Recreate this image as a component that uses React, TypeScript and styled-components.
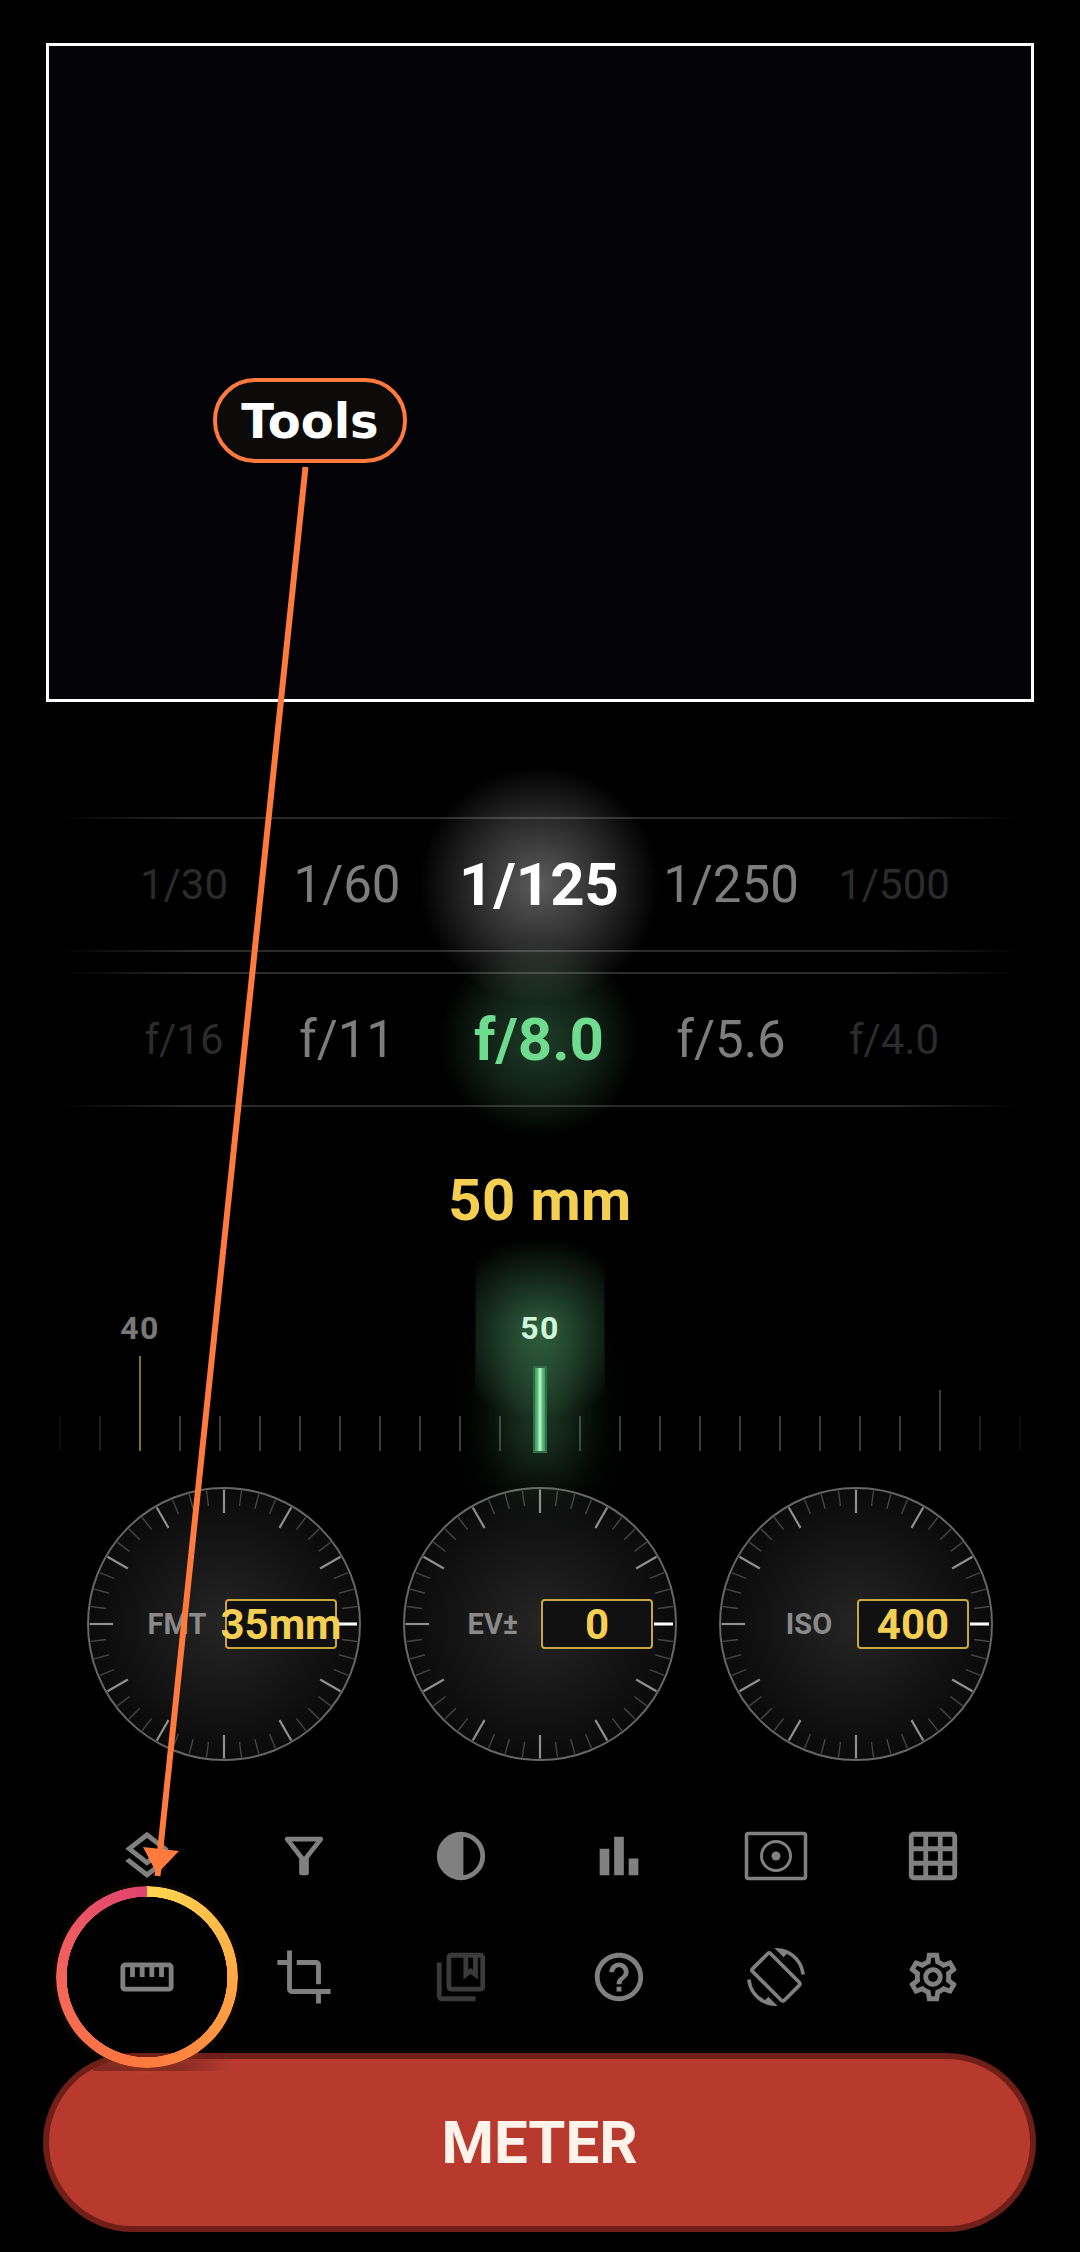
import React from "react";
import styled, { createGlobalStyle } from "styled-components";
import {
  MdOutlineLayers,
  MdOutlineFilterAlt,
  MdBarChart,
  MdGridOn,
  MdOutlineStraighten,
  MdCrop,
  MdOutlineCollectionsBookmark,
  MdHelpOutline,
  MdOutlineScreenRotation,
  MdOutlineSettings,
} from "react-icons/md";

const Global = createGlobalStyle`
  html, body { margin: 0; padding: 0; background: #000; }
  body { font-family: Roboto, "Liberation Sans", sans-serif; }
`;

const Page = styled.div`
  position: relative;
  width: 1080px;
  height: 2252px;
  background: #000;
  overflow: hidden;
  display: flex;
  flex-direction: column;
`;

const Viewfinder = styled.div`
  box-sizing: border-box;
  flex: none;
  width: 988px;
  height: 659px;
  margin: 43px 46px 0;
  border: 3px solid #fff;
  background: #030206;
`;

const ScaleRow = styled.div<{ $top: number }>`
  position: relative;
  flex: none;
  height: 135px;
  margin-top: ${(p) => p.$top}px;
  padding-right: 2px;
  display: grid;
  grid-template-columns: 163px 163px 221px 163px 163px;
  justify-content: center;
  align-items: center;
  &::before,
  &::after {
    content: "";
    position: absolute;
    left: 60px;
    right: 60px;
    height: 2px;
    z-index: 2;
    background: linear-gradient(
      90deg,
      rgba(255, 255, 255, 0),
      rgba(255, 255, 255, 0.17) 14%,
      rgba(255, 255, 255, 0.17) 86%,
      rgba(255, 255, 255, 0)
    );
  }
  &::before { top: 0; }
  &::after { bottom: 0; }
`;

const ScaleValue = styled.div<{ $level: 0 | 1 | 2; $green?: boolean }>`
  position: relative;
  text-align: center;
  white-space: nowrap;
  line-height: 1;
  font-size: ${(p) => [42, 51, 60][p.$level]}px;
  font-weight: ${(p) => (p.$level === 2 ? 700 : 400)};
  color: ${(p) =>
    p.$level === 2 ? (p.$green ? "#6EDB8F" : "#fff") : p.$level === 1 ? "#7d7d7d" : "#2b2b2b"};
`;

const ValueText = styled.span`
  position: relative;
  z-index: 1;
`;

const ValueGlow = styled.div<{ $green?: boolean }>`
  position: absolute;
  left: 50%;
  top: 50%;
  width: ${(p) => (p.$green ? 200 : 240)}px;
  height: ${(p) => (p.$green ? 196 : 238)}px;
  transform: translate(-50%, -50%);
  pointer-events: none;
  background: ${(p) =>
    p.$green
      ? "radial-gradient(ellipse closest-side, rgba(110,219,143,.28), rgba(110,219,143,.15) 55%, rgba(110,219,143,0))"
      : "radial-gradient(ellipse closest-side, rgba(255,255,255,.36), rgba(255,255,255,.17) 55%, rgba(255,255,255,0))"};
`;

const FocalTitle = styled.div`
  flex: none;
  margin-top: 58px;
  height: 70px;
  line-height: 70px;
  text-align: center;
  font-size: 58px;
  font-weight: 700;
  letter-spacing: 0.4px;
  color: #f5cf52;
`;

const Ruler = styled.div`
  flex: none;
  height: 146px;
  margin-top: 70px;
  display: flex;
  justify-content: center;
  align-items: flex-end;
`;

const TickCell = styled.div`
  position: relative;
  flex: none;
  width: 40px;
  display: flex;
  flex-direction: column;
  align-items: center;
  justify-content: flex-end;
`;

const Tick = styled.div<{ $h: number; $color: string }>`
  width: 2px;
  height: ${(p) => p.$h}px;
  background: ${(p) => p.$color};
`;

const RulerLabel = styled.div<{ $active?: boolean }>`
  position: absolute;
  left: 50%;
  bottom: 105px;
  transform: translateX(-50%);
  z-index: 1;
  font-size: 32px;
  line-height: 36px;
  font-weight: 700;
  letter-spacing: 1.5px;
  color: ${(p) => (p.$active ? "#D6F7DF" : "#787878")};
`;

const LabelGlow = styled.div`
  position: absolute;
  left: 50%;
  bottom: -5px;
  width: 129px;
  height: 216px;
  transform: translateX(-50%);
  background: radial-gradient(
    ellipse 100px 92px at 50% 88px,
    rgba(110, 219, 143, 0.42),
    rgba(110, 219, 143, 0.16) 60%,
    rgba(110, 219, 143, 0)
  );
`;

const Needle = styled.div`
  box-sizing: border-box;
  position: relative;
  z-index: 1;
  width: 14px;
  height: 87px;
  margin-bottom: -2px;
  border: 2px solid #2f6e48;
  background: linear-gradient(90deg, #3f9a60, #5cc07c 25%, #c8f9d5 50%, #5cc07c 75%, #3f9a60);
  box-shadow: 0 4px 62px 14px rgba(110, 219, 143, 0.48);
`;

const WheelRow = styled.div`
  flex: none;
  margin-top: 36px;
  display: flex;
  justify-content: center;
  gap: 42px;
`;

const Wheel = styled.div`
  box-sizing: border-box;
  position: relative;
  flex: none;
  width: 274px;
  height: 274px;
  border-radius: 50%;
  border: 2px solid #666;
  background: radial-gradient(circle closest-side, #252525, #0a0a0a);
  display: grid;
  grid-template-columns: 1fr 1fr;
  align-items: center;
`;

const WheelTicks = styled.svg`
  position: absolute;
  left: -2px;
  top: -2px;
  width: 274px;
  height: 274px;
`;

const WheelLabel = styled.div`
  position: relative;
  padding-left: 41px;
  text-align: center;
  font-size: 29px;
  font-weight: 700;
  color: #8a8a8a;
`;

const WheelValue = styled.div`
  box-sizing: border-box;
  position: relative;
  width: 112px;
  height: 50px;
  margin-left: 1px;
  border: 2px solid #c9a63c;
  border-radius: 4px;
  background: #111;
  display: flex;
  align-items: center;
  justify-content: center;
  white-space: nowrap;
  font-size: 42px;
  font-weight: 700;
  color: #f5cf52;
`;

const ToolGrid = styled.div`
  position: relative;
  z-index: 2;
  flex: none;
  margin: 34px 0 0 68px;
  width: 944px;
  display: grid;
  grid-template-columns: repeat(6, 1fr);
  grid-auto-rows: 121px;
  place-items: center;
  color: #808080;
  font-size: 58px;
`;

const ToolCell = styled.div<{ $dim?: boolean }>`
  position: relative;
  width: 58px;
  height: 58px;
  display: flex;
  align-items: center;
  justify-content: center;
  color: ${(p) => (p.$dim ? "#3a3a3a" : "#808080")};
  svg { flex: none; }
`;

const HighlightRing = styled.div`
  position: absolute;
  left: 50%;
  top: 50%;
  width: 182px;
  height: 182px;
  transform: translate(-50%, -50%);
  border-radius: 50%;
  box-shadow: 0 0 10px rgba(255, 170, 60, 0.12), inset 0 0 12px rgba(255, 170, 60, 0.1);
  &::before {
    content: "";
    position: absolute;
    inset: 0;
    border-radius: 50%;
    background: conic-gradient(#ffd74f 0deg, #ffa844 90deg, #ff7a3d 180deg, #f4645a 270deg, #e0436f 360deg);
    mask: radial-gradient(circle closest-side, transparent 0 calc(100% - 11px), #000 calc(100% - 10.5px));
  }
`;

const MeterButton = styled.div`
  box-sizing: border-box;
  position: relative;
  flex: none;
  width: 993px;
  height: 179px;
  margin: 16px 0 0 43px;
  border: 6px solid #6f1f18;
  border-radius: 90px;
  background: #b83a2f;
  overflow: hidden;
  display: flex;
  align-items: center;
  justify-content: center;
  font-size: 60px;
  font-weight: 700;
  color: #fff3ea;
`;

const ButtonShade = styled.div`
  position: absolute;
  left: 44px;
  top: 0;
  width: 140px;
  height: 12px;
  background: linear-gradient(90deg, rgba(0, 0, 0, 0.3) 55%, rgba(0, 0, 0, 0));
`;

const Overlay = styled.svg`
  position: absolute;
  left: 0;
  top: 0;
  z-index: 5;
  pointer-events: none;
`;

const TooltipPill = styled.div`
  box-sizing: border-box;
  position: absolute;
  left: 213px;
  top: 378px;
  z-index: 6;
  width: 194px;
  height: 85px;
  border: 4px solid #ff7a3d;
  border-radius: 42px;
  background: #0d0b0a;
  display: flex;
  align-items: center;
  justify-content: center;
  font-family: "DejaVu Sans", sans-serif;
  font-size: 48px;
  font-weight: 700;
  color: #fff;
`;

const shutter = ["1/30", "1/60", "1/125", "1/250", "1/500"];
const aperture = ["f/16", "f/11", "f/8.0", "f/5.6", "f/4.0"];
const levels: (0 | 1 | 2)[] = [0, 1, 2, 1, 0];

const tickXs = Array.from({ length: 25 }, (_, i) => 60 + i * 40);

function tickColor(x: number) {
  if (x === 60 || x === 1020) return "#0d0d0d";
  if (x === 100 || x === 980) return "#1c1c1c";
  return "#3c3c3c";
}

function WheelScale() {
  const c = 137;
  return (
    <WheelTicks viewBox="0 0 274 274">
      {Array.from({ length: 48 }, (_, i) => {
        if (i === 12) return null;
        const major = i % 4 === 0;
        const a = (i * 7.5 * Math.PI) / 180;
        const r1 = 134.5;
        const r2 = major ? 111 : 119;
        return (
          <line
            key={i}
            x1={c + r1 * Math.sin(a)}
            y1={c - r1 * Math.cos(a)}
            x2={c + r2 * Math.sin(a)}
            y2={c - r2 * Math.cos(a)}
            stroke={major ? "#8f8f8f" : "#444"}
            strokeWidth={major ? 2.2 : 1.4}
          />
        );
      })}
      <line x1={c + 114} y1={c} x2={c + 133} y2={c} stroke="#fff" strokeWidth={3} />
    </WheelTicks>
  );
}

function ContrastIcon() {
  return (
    <svg width="58" height="58" viewBox="0 0 24 24" fill="currentColor">
      <path
        fillRule="evenodd"
        d="M12 2a10 10 0 1 0 0 20 10 10 0 0 0 0-20zm1 2.07c3.94.49 7 3.85 7 7.93s-3.06 7.44-7 7.93V4.07z"
      />
    </svg>
  );
}

function MeteringIcon() {
  return (
    <svg width="64" height="50" viewBox="0 0 64 50" fill="none" stroke="currentColor">
      <rect x="2.5" y="2.5" width="59" height="45" rx="2" strokeWidth="3.5" />
      <circle cx="32" cy="25" r="14.5" strokeWidth="3" />
      <circle cx="32" cy="25" r="4.5" fill="currentColor" stroke="none" />
    </svg>
  );
}

export default function App() {
  return (
    <Page>
      <Global />
      <Viewfinder />

      <ScaleRow $top={115}>
        {shutter.map((t, i) => (
          <ScaleValue key={t} $level={levels[i]}>
            {i === 2 && <ValueGlow />}
            <ValueText>{t}</ValueText>
          </ScaleValue>
        ))}
      </ScaleRow>
      <ScaleRow $top={20}>
        {aperture.map((t, i) => (
          <ScaleValue key={t} $level={levels[i]} $green={i === 2}>
            {i === 2 && <ValueGlow $green />}
            <ValueText>{t}</ValueText>
          </ScaleValue>
        ))}
      </ScaleRow>

      <FocalTitle>50 mm</FocalTitle>

      <Ruler>
        {tickXs.map((x) => {
          if (x === 540) {
            return (
              <TickCell key={x}>
                <LabelGlow />
                <RulerLabel $active>50</RulerLabel>
                <Needle />
              </TickCell>
            );
          }
          if (x === 140) {
            return (
              <TickCell key={x}>
                <RulerLabel>40</RulerLabel>
                <Tick $h={95} $color="#8a6f2a" />
              </TickCell>
            );
          }
          return (
            <TickCell key={x}>
              <Tick $h={x === 940 ? 61 : 35} $color={tickColor(x)} />
            </TickCell>
          );
        })}
      </Ruler>

      <WheelRow>
        {[
          ["FMT", "35mm"],
          ["EV±", "0"],
          ["ISO", "400"],
        ].map(([label, value]) => (
          <Wheel key={label}>
            <WheelScale />
            <WheelLabel>{label}</WheelLabel>
            <WheelValue>{value}</WheelValue>
          </Wheel>
        ))}
      </WheelRow>

      <ToolGrid>
        <ToolCell><MdOutlineLayers size={58} /></ToolCell>
        <ToolCell><MdOutlineFilterAlt size={58} /></ToolCell>
        <ToolCell><ContrastIcon /></ToolCell>
        <ToolCell><MdBarChart size={58} /></ToolCell>
        <ToolCell><MeteringIcon /></ToolCell>
        <ToolCell><MdGridOn size={58} /></ToolCell>
        <ToolCell>
          <HighlightRing />
          <MdOutlineStraighten size={58} />
        </ToolCell>
        <ToolCell><MdCrop size={58} /></ToolCell>
        <ToolCell $dim><MdOutlineCollectionsBookmark size={58} /></ToolCell>
        <ToolCell><MdHelpOutline size={58} /></ToolCell>
        <ToolCell><MdOutlineScreenRotation size={58} /></ToolCell>
        <ToolCell><MdOutlineSettings size={58} /></ToolCell>
      </ToolGrid>

      <MeterButton>
        <ButtonShade />
        METER
      </MeterButton>

      <Overlay width="1080" height="2252" viewBox="0 0 1080 2252">
        <line x1="305.5" y1="467" x2="157.5" y2="1876" stroke="#ff7a3d" strokeWidth="6" />
        <polygon points="143,1847 179,1851 157,1874" fill="#ff7a3d" />
      </Overlay>
      <TooltipPill>Tools</TooltipPill>
    </Page>
  );
}
